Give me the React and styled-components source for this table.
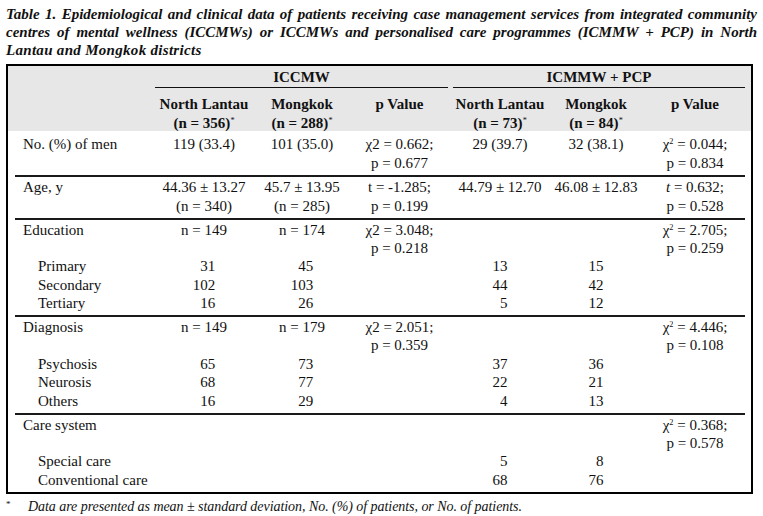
import React from 'react';
import styled, { createGlobalStyle } from 'styled-components';

const GlobalStyle = createGlobalStyle`
  body {
    margin: 0;
    background: #fff;
    color: #111;
    font-family: "Liberation Serif", "Times New Roman", serif;
  }
`;

const COLUMNS = '140px 98px 98px 97px 5px 94px 98px 100px';

const Page = styled.div`
  width: 751px;
  padding: 5px 0 0 6px;
`;

const Caption = styled.div`
  font-size: 15px;
  font-weight: bold;
  font-style: italic;
  line-height: 18px;
  margin-bottom: 5px;
`;

const CaptionLine = styled.div`
  white-space: nowrap;
  text-align: left;
  text-align-last: ${(p) => (p.$justify ? 'justify' : 'left')};
  letter-spacing: ${(p) => (p.$justify ? '0' : '0.3px')};
`;

const Frame = styled.div`
  width: 747px;
  box-sizing: border-box;
  border: 2px solid #000;
  font-size: 15px;
  line-height: 18.4px;
`;

const Header = styled.div`
  background: #e7e7e8;
  padding: 2px 6px 0 7px;
`;

const Row = styled.div`
  display: grid;
  grid-template-columns: ${COLUMNS};
`;

const GroupLabel = styled.div`
  grid-column: ${(p) => p.$span};
  text-align: center;
  font-weight: bold;
  padding-bottom: 1px;
  border-bottom: 1.5px solid #111;
`;

const HeadRow = styled(Row)`
  padding-top: 7px;
  height: 36px;
`;

const HeadCell = styled.div`
  text-align: center;
  font-weight: bold;
  white-space: nowrap;
`;

const Sup = styled.span`
  font-size: 0.55em;
  line-height: 0;
  vertical-align: 0.55em;
  font-weight: normal;
`;

const Section = styled.div`
  margin: 0 6px 0 7px;
  border-top: ${(p) => (p.$first ? 'none' : '2px solid #1a1a1a')};
  padding: ${(p) => (p.$first ? '4px 0 3px' : '1px 0 2.5px')};
`;

const Label = styled.div`
  padding-left: ${(p) => (p.$indent ? 23 : 8)}px;
  white-space: nowrap;
`;

const Cell = styled.div`
  text-align: center;
  white-space: nowrap;
`;

const Num = styled.span`
  display: inline-block;
  width: ${(p) => p.$digits * 0.5}em;
  text-align: right;
`;

const Footnote = styled.div`
  display: flex;
  font-size: 14px;
  line-height: 18px;
  margin-top: 4px;
`;

const Marker = styled.span`
  width: 22px;
  font-size: 9px;
  line-height: 12px;
`;

const Note = styled.span`
  font-style: italic;
  letter-spacing: -0.05px;
`;

function Chi({ sup, value, p }) {
  return (
    <>
      χ{sup ? <Sup>2</Sup> : '2'} = {value};
      <br />
      p = {p}
    </>
  );
}

const n = (v, digits) => (v === '' ? '' : <Num $digits={digits}>{v}</Num>);

const sections = [
  [
    {
      label: 'No. (%) of men',
      cells: [
        '119 (33.4)',
        '101 (35.0)',
        <Chi value="0.662" p="0.677" />,
        '29 (39.7)',
        '32 (38.1)',
        <Chi sup value="0.044" p="0.834" />,
      ],
    },
  ],
  [
    {
      label: 'Age, y',
      cells: [
        <>44.36 ± 13.27<br />(n = 340)</>,
        <>45.7 ± 13.95<br />(n = 285)</>,
        <>t = -1.285;<br />p = 0.199</>,
        '44.79 ± 12.70',
        '46.08 ± 12.83',
        <><i>t</i> = 0.632;<br />p = 0.528</>,
      ],
    },
  ],
  [
    {
      label: 'Education',
      cells: ['n = 149', 'n = 174', <Chi value="3.048" p="0.218" />, '', '', <Chi sup value="2.705" p="0.259" />],
    },
    { sub: true, label: 'Primary', nums: ['31', '45', '13', '15'] },
    { sub: true, label: 'Secondary', nums: ['102', '103', '44', '42'] },
    { sub: true, label: 'Tertiary', nums: ['16', '26', '5', '12'] },
  ],
  [
    {
      label: 'Diagnosis',
      cells: ['n = 149', 'n = 179', <Chi value="2.051" p="0.359" />, '', '', <Chi sup value="4.446" p="0.108" />],
    },
    { sub: true, label: 'Psychosis', nums: ['65', '73', '37', '36'] },
    { sub: true, label: 'Neurosis', nums: ['68', '77', '22', '21'] },
    { sub: true, label: 'Others', nums: ['16', '29', '4', '13'] },
  ],
  [
    {
      label: 'Care system',
      cells: ['', '', '', '', '', <Chi sup value="0.368" p="0.578" />],
    },
    { sub: true, label: 'Special care', nums: ['', '', '5', '8'] },
    { sub: true, label: 'Conventional care', nums: ['', '', '68', '76'] },
  ],
];

function DataRow({ row }) {
  const cells = row.sub
    ? [n(row.nums[0], 3), n(row.nums[1], 3), '', n(row.nums[2], 2), n(row.nums[3], 2), '']
    : row.cells;
  return (
    <Row>
      <Label $indent={row.sub}>{row.label}</Label>
      <Cell>{cells[0]}</Cell>
      <Cell>{cells[1]}</Cell>
      <Cell>{cells[2]}</Cell>
      <div />
      <Cell>{cells[3]}</Cell>
      <Cell>{cells[4]}</Cell>
      <Cell>{cells[5]}</Cell>
    </Row>
  );
}

function TableHeader() {
  return (
    <Header>
      <Row>
        <GroupLabel $span="2 / 5">ICCMW</GroupLabel>
        <GroupLabel $span="6 / 9">ICMMW + PCP</GroupLabel>
      </Row>
      <HeadRow>
        <div />
        <HeadCell>North Lantau<br />(n = 356)<Sup>*</Sup></HeadCell>
        <HeadCell>Mongkok<br />(n = 288)<Sup>*</Sup></HeadCell>
        <HeadCell>p Value</HeadCell>
        <div />
        <HeadCell>North Lantau<br />(n = 73)<Sup>*</Sup></HeadCell>
        <HeadCell>Mongkok<br />(n = 84)<Sup>*</Sup></HeadCell>
        <HeadCell>p Value</HeadCell>
      </HeadRow>
    </Header>
  );
}

export default function App() {
  return (
    <>
      <GlobalStyle />
      <Page>
        <Caption>
          <CaptionLine $justify>
            Table 1. Epidemiological and clinical data of patients receiving case management services from integrated community
          </CaptionLine>
          <CaptionLine $justify>
            centres of mental wellness (ICCMWs) or ICCMWs and personalised care programmes (ICMMW + PCP) in North
          </CaptionLine>
          <CaptionLine>Lantau and Mongkok districts</CaptionLine>
        </Caption>
        <Frame>
          <TableHeader />
          {sections.map((rows, i) => (
            <Section key={i} $first={i === 0}>
              {rows.map((row) => (
                <DataRow key={row.label} row={row} />
              ))}
            </Section>
          ))}
        </Frame>
        <Footnote>
          <Marker>*</Marker>
          <Note>
            Data are presented as mean ± standard deviation, No. (%) of patients, or No. of patients.
          </Note>
        </Footnote>
      </Page>
    </>
  );
}
